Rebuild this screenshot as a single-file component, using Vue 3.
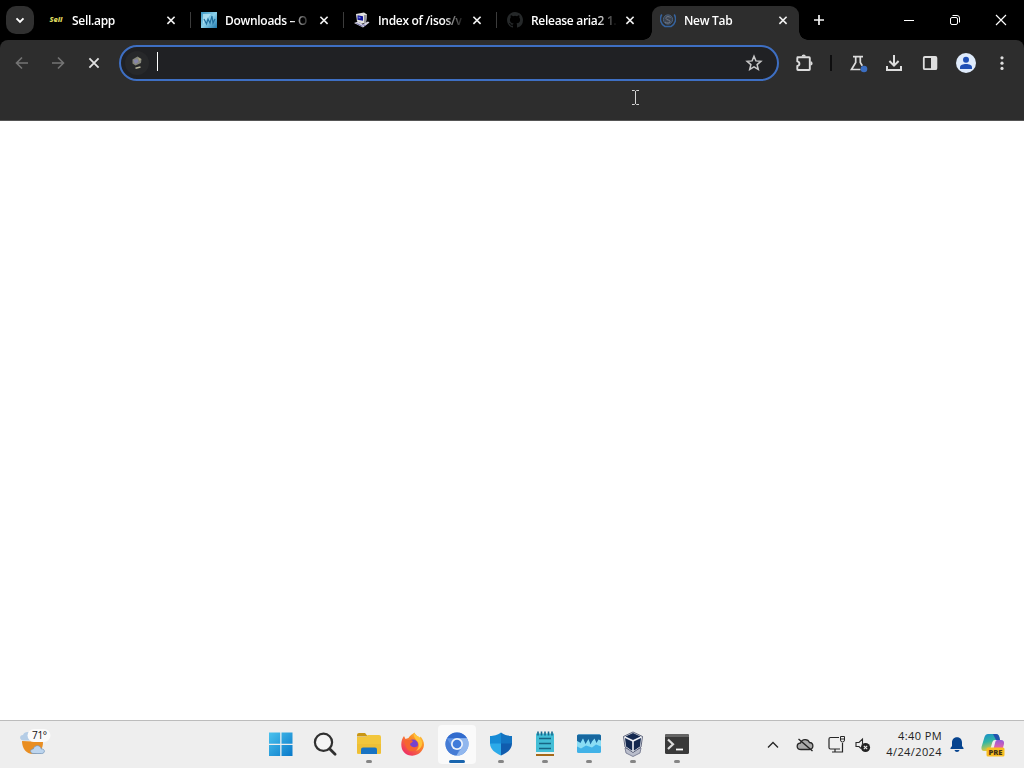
<script setup>
import { ref } from 'vue'

const tabs = ref([
  { id: 1, title: 'Sell.app', icon: 'sell' },
  { id: 2, title: 'Downloads – O', icon: 'wave' },
  { id: 3, title: 'Index of /isos/v', icon: 'pc' },
  { id: 4, title: 'Release aria2 1.', icon: 'github' },
  { id: 5, title: 'New Tab', icon: 'globe' }
])
const activeTab = ref(5)

const apps = [
  { name: 'start' },
  { name: 'search' },
  { name: 'files', running: true },
  { name: 'firefox' },
  { name: 'chromium', running: true, active: true },
  { name: 'shield', running: true },
  { name: 'notepad', running: true },
  { name: 'monitor', running: true },
  { name: 'vbox', running: true },
  { name: 'terminal', running: true }
]

function closeTab(id) {
  tabs.value = tabs.value.filter(t => t.id !== id)
}
</script>

<template>
  <div class="desktop">
    <header class="tabstrip">
      <button class="tab-search">
        <svg width="28" height="28" viewBox="0 0 28 28"><path d="M10.5 12.3l3.5 3.5 3.5-3.5" fill="none" stroke="#fff" stroke-width="1.9" /></svg>
      </button>
      <div class="tabs">
        <div v-for="tab in tabs" :key="tab.id" class="tab" :class="{ active: tab.id === activeTab }" @click="activeTab = tab.id">
          <svg v-if="tab.icon === 'sell'" class="favicon" viewBox="0 0 16 16">
            <text x="1.5" y="10.3" class="sell-text" textLength="13" lengthAdjust="spacingAndGlyphs">Sell</text>
          </svg>
          <svg v-else-if="tab.icon === 'wave'" class="favicon" viewBox="0 0 16 16">
            <defs><linearGradient id="sky" x2="1" y2="1"><stop stop-color="#3994bf" /><stop offset=".5" stop-color="#8bd0ea" /><stop offset="1" stop-color="#1d77ab" /></linearGradient></defs>
            <rect width="16" height="16" fill="url(#sky)" />
            <path d="M2 2h8L2 12z" fill="#c3eaf5" opacity=".7" />
            <path d="M3 7l2.500 5L7 7l2 4 2-7 1 7 2-4" fill="none" stroke="#216f9e" stroke-width="1.200" />
          </svg>
          <svg v-else-if="tab.icon === 'pc'" class="favicon" viewBox="0 0 16 16">
            <path d="M2 2l8-1.5 3 2-1 8-4 1-5-2z" fill="#e3e3e0" />
            <path d="M3.5 3.2l5.5 1v4.6l-5.5-1z" fill="#11159a" />
            <path d="M4.5 4.5l2 .4v1.7l-2-.4z" fill="#6d7be8" />
            <path d="M10 3l3 0-1 7-2 1z" fill="#96969c" />
            <path d="M0 11l4-1.5 5 2.5 5-2.5 1.5 1-6.5 5z" fill="#d4d3e0" />
            <path d="M2.5 11.4l6 3M8 12.5l4 1.2" stroke="#6d6da5" stroke-width="1" />
          </svg>
          <svg v-else-if="tab.icon === 'github'" class="favicon" viewBox="0 0 16 16">
            <path fill="#252829" d="M8 0C3.58 0 0 3.58 0 8c0 3.54 2.29 6.53 5.47 7.59.4.07.55-.17.55-.38 0-.19-.01-.82-.01-1.49-2.01.37-2.53-.49-2.69-.94-.09-.23-.48-.94-.82-1.13-.28-.15-.68-.52-.01-.53.63-.01 1.08.58 1.23.82.72 1.21 1.87.87 2.33.66.07-.52.28-.87.51-1.07-1.78-.2-3.64-.89-3.64-3.95 0-.87.31-1.59.82-2.15-.08-.2-.36-1.02.08-2.12 0 0 .67-.21 2.2.82a7.6 7.6 0 014 0c1.53-1.04 2.2-.82 2.2-.82.44 1.1.16 1.92.08 2.12.51.56.82 1.27.82 2.15 0 3.07-1.87 3.75-3.65 3.95.29.25.54.73.54 1.48 0 1.07-.01 1.93-.01 2.2 0 .21.15.46.55.38A8 8 0 0016 8c0-4.42-3.58-8-8-8z" />
          </svg>
          <svg v-else class="favicon" viewBox="0 0 16 16">
            <path d="M1.800 2.500C-1 7 1 12.500 5 14.500h6c4-2 6-7.500 3.200-12" fill="none" stroke="#35639f" stroke-width="1.500" />
            <circle cx="8" cy="7.500" r="4.600" fill="#3b424e" stroke="#4b6483" />
            <path d="M10.500 5.500C8.500 4 5.500 4.500 6 6.500s4 1 4 3-3.500 2-5 .5" fill="none" stroke="#737b88" stroke-width="1" />
          </svg>
          <span class="title">{{ tab.title }}</span>
          <button class="close" @click.stop="closeTab(tab.id)">
            <svg width="16" height="16" viewBox="0 0 16 16"><path d="M4.4 4.7l7.2 7.200M11.6 4.700l-7.2 7.200" stroke="#f2f2f2" stroke-width="1.600" /></svg>
          </button>
        </div>
      </div>
      <button class="new-tab">
        <svg width="16" height="16" viewBox="0 0 16 16"><path d="M8 3v10M3 8h10" stroke="#f5f5f5" stroke-width="1.7" /></svg>
      </button>
      <div class="window-controls">
        <svg viewBox="0 0 46 40"><path d="M18 20.5h10" stroke="#fff" /></svg>
        <svg viewBox="0 0 46 40"><rect x="18.5" y="17.5" width="7" height="7" rx="1.5" fill="none" stroke="#fff" /><path d="M20.5 15.5h4.5q2.5 0 2.5 2.5v4.5" fill="none" stroke="#fff" /></svg>
        <svg viewBox="0 0 46 40"><path d="M18 15l10 10M28 15l-10 10" stroke="#fff" stroke-width="1.15" /></svg>
      </div>
    </header>

    <div class="chrome">
      <nav class="toolbar">
        <div class="nav-buttons">
          <svg viewBox="0 0 36 36"><path d="M28 18H17M22 12.5L16.5 18l5.5 5.5" fill="none" stroke="#747474" stroke-width="1.6" /></svg>
          <svg viewBox="0 0 36 36"><path d="M16 18h11M22 12.5l5.5 5.5-5.5 5.5" fill="none" stroke="#747474" stroke-width="1.6" /></svg>
          <svg viewBox="0 0 36 36"><path d="M17.4 13.4l9.2 9.2M26.6 13.4l-9.2 9.2" stroke="#e2e2e2" stroke-width="1.8" /></svg>
        </div>
        <div class="omnibox">
          <svg class="site" width="24" height="24" viewBox="0 0 24 24">
            <circle cx="12" cy="12" r="12" fill="#27282a" />
            <path d="M7.500 8.500l5-3 4 2.500-.5 4-5.500 2.500-3-2z" fill="#85867a" />
            <path d="M8.500 9l4-1 1 3-3.500 2z" fill="#8585aa" />
            <path d="M13 6.500l3 1.500-1.500 2z" fill="#aca681" />
            <path d="M10.500 17.300l5-1.300" stroke="#b6b59d" stroke-width="1.600" />
          </svg>
          <span class="caret"></span>
          <svg class="star" width="18" height="18" viewBox="0 0 18 18"><path d="M9 2.200l1.900 4.700 5 .4-3.800 3.300 1.200 4.900L9 12.800l-4.300 2.700 1.200-4.900-3.800-3.300 5-.4z" fill="none" stroke="#c8c8c8" stroke-width="1.500" /></svg>
        </div>
        <svg class="ext" viewBox="0 0 36 36">
          <path d="M11.500 12.200h11.600q.7 0 .7.700v11.400q0 .7-.7.700H12q-.7 0-.7-.7V21c2.800-.6 2.800-4 0-4.600v-3.500q0-.7.700-.7z" fill="none" stroke="#dcdcdc" stroke-width="1.900" stroke-linejoin="round" />
          <path d="M15.600 11.500a2.100 2.100 0 014.200 0zM24.500 16.300a2.100 2.100 0 010 4.200z" fill="#dcdcdc" />
        </svg>
        <span class="divider"></span>
        <div class="actions">
          <svg viewBox="0 0 36 36">
            <path d="M13 11.600h10M15.700 12v5.500L11.500 24.500h9M20.300 12v5.500l2 3.300" fill="none" stroke="#dcdcdc" stroke-width="1.700" />
            <circle cx="24" cy="24" r="3.300" fill="#3b6ec2" />
          </svg>
          <svg viewBox="0 0 36 36"><path d="M18 10v10.500M13.400 16l4.600 4.600 4.600-4.600M11 21v4h14v-4" fill="none" stroke="#dedede" stroke-width="2" /></svg>
          <svg viewBox="0 0 36 36"><rect x="11.800" y="12" width="12.600" height="12.200" rx="1" fill="none" stroke="#dedede" stroke-width="1.800" /><path d="M19 12h6v12h-6z" fill="#dedede" /></svg>
          <svg viewBox="0 0 36 36"><circle cx="18" cy="18" r="10" fill="#dfebfb" /><circle cx="18" cy="14.800" r="3" fill="#1f4fb5" /><path d="M12 24v-1.800c0-4.300 12-4.300 12 0V24z" fill="#1f4fb5" /></svg>
          <svg viewBox="0 0 36 36"><g fill="#dedede"><circle cx="18" cy="12.800" r="1.600" /><circle cx="18" cy="18.200" r="1.600" /><circle cx="18" cy="23.400" r="1.600" /></g></svg>
        </div>
      </nav>
    </div>

    <main class="page"></main>

    <footer class="taskbar">
      <div class="weather">
        <svg width="36" height="32" viewBox="0 0 36 32">
          <path d="M5 12.500c-5 0-5-5.500-1-5.500 1-4 8-4 9 0v5.500z" fill="#b5cde6" />
          <path d="M3 13c0 7 4 13 11 13s10-5 10-12z" fill="#e98e22" />
          <rect x="8.500" y="1" width="23" height="13" rx="6.500" fill="#fbfbfb" />
          <path d="M14 25.500c-3.500-.5-3-4.500.3-4.500 1.200-4.500 7-4.500 8 0 4-.4 4 4.500.5 4.500z" fill="#bdd5ee" stroke="#7999bd" stroke-width=".8" />
        </svg>
        <span>71°</span>
      </div>
      <div class="apps">
        <div v-for="app in apps" :key="app.name" class="app" :class="{ active: app.active, running: app.running }">
          <svg v-if="app.name === 'start'" viewBox="0 0 28 28">
            <defs><linearGradient id="win" gradientUnits="userSpaceOnUse" x1="2" y1="2" x2="26" y2="26"><stop stop-color="#4bc3ee" /><stop offset="1" stop-color="#0878c9" /></linearGradient></defs>
            <path d="M2 2.5h11.2v11.2H2zM14.5 2.5h11v11.2h-11zM2 15h11.2v11H2zM14.5 15h11v11h-11z" fill="url(#win)" />
          </svg>
          <svg v-else-if="app.name === 'search'" viewBox="0 0 28 28">
            <circle cx="12.5" cy="12.3" r="8.6" fill="#f4f4f4" stroke="#303030" stroke-width="2.2" />
            <path d="M18.6 18.7l5.5 5.5" stroke="#303030" stroke-width="2.8" stroke-linecap="round" />
          </svg>
          <svg v-else-if="app.name === 'files'" viewBox="0 0 28 28">
            <path d="M2 5q0-2 2-2h6l3 3.5H2z" fill="#c99614" />
            <path d="M2 7h8l3-2h11q2 0 2 2v16q0 1-1 1H3q-1 0-1-1z" fill="#f2c63c" />
            <path d="M2 14h24v9H2z" fill="#e9b82f" opacity=".5" />
            <path d="M6 24v-4.500q0-2 2-2h12q2 0 2 2V24z" fill="#1873c3" />
          </svg>
          <svg v-else-if="app.name === 'firefox'" viewBox="0 0 28 28">
            <defs><linearGradient id="fox" x1="1" y1="0" x2=".2" y2="1"><stop stop-color="#ffe145" /><stop offset=".4" stop-color="#fb8b25" /><stop offset="1" stop-color="#ed2869" /></linearGradient></defs>
            <path d="M5 6l1.5 3 3-1c1-2 2.5-3 4-4l2-1.5c1 3 4 3.5 5.3 5.5l.8-1.5c3.5 4 4.6 9 1.8 13.3C18 28.500 6 27 3 19 1.500 14.500 2.500 9 5 6z" fill="url(#fox)" />
            <circle cx="14" cy="14.500" r="5" fill="#7542cd" />
            <path d="M5 11c3-2 5 0 7-1l2 1c-1 2-3 2-3 3 0 3 6 5 8 1-1 8-10 8-12 2z" fill="#f6652f" />
            <path d="M15 3c-1 4 2 6 4 9 2 4 0 7-2 9 6-2 8-8 4-13-1-2-5-2-6-5z" fill="#ffc43a" />
          </svg>
          <svg v-else-if="app.name === 'chromium'" viewBox="0 0 28 28">
            <circle cx="14" cy="14" r="11.500" fill="#5e94e6" />
            <path d="M4 8.200A11.500 11.500 0 0124 8.200H14z" fill="#316bcd" />
            <path d="M4 8.200L9 17l7 3-2.500 5.500A11.500 11.500 0 014 8.200z" fill="#457bd4" />
            <path d="M24 8.200H14l5 9-5.500 8.300A11.500 11.500 0 0024 8.200z" fill="#91b7ee" />
            <circle cx="14" cy="14" r="6" fill="#edf3fb" /><circle cx="14" cy="14" r="4.300" fill="#407bda" />
          </svg>
          <svg v-else-if="app.name === 'shield'" viewBox="0 0 28 28">
            <path d="M14 2.500c-4 3-7 3.300-11 3.500v8h11z" fill="#168bd6" />
            <path d="M14 2.500c4 3 7 3.300 11 3.500v8H14z" fill="#1373c1" />
            <path d="M3 13.500h11v12C8 23 3 19 3 13.500z" fill="#2caae9" />
            <path d="M25 13.500H14v12c6-2.500 11-6.500 11-12z" fill="#105cae" />
          </svg>
          <svg v-else-if="app.name === 'notepad'" viewBox="0 0 28 28">
            <path d="M5 3.500h18v20H5z" fill="#43bed6" />
            <path d="M5 23h18v3H5z" fill="#a56919" /><path d="M5 22h18v2H5z" fill="#edf3ed" />
            <path d="M7 1.500v4M10.500 1.500v4M14 1.500v4M17.500 1.500v4M21 1.500v4" stroke="#17678b" stroke-width="1.600" />
            <path d="M8 8.500h12M8 13.500h12M8 18.500h12" stroke="#176584" stroke-width="1.700" />
          </svg>
          <svg v-else-if="app.name === 'monitor'" viewBox="0 0 28 28">
            <rect x="2" y="4.500" width="24" height="18.500" rx="1.500" fill="#41b2e7" />
            <path d="M2 6Q2 4.500 3.500 4.500h21Q26 4.500 26 6v5.500l-2.500-1-2 3.500-2-4.500-2.500 3-1.500 3-2-5.500-3 5L8 8.500 5.500 13 2 11z" fill="#17679f" />
            <path d="M2 11l3.500 2L8 8.500l2.500 5.500 3-5 2 5.500 1.500-3 2.500-3 2 4.500 2-3.500 2.500 1v6l-5-2-4 3-6-2-5 3-4-2z" fill="#8bddf4" />
          </svg>
          <svg v-else-if="app.name === 'vbox'" viewBox="0 0 28 28">
            <path d="M6 18l8 2 8-2-1 5-7 3.500-7-3.500z" fill="#b9bdcb" stroke="#686d86" stroke-width=".8" />
            <path d="M14 2l9.500 4.500-1.500 10.500-8 5.500-8-5.500L4.500 6.500z" fill="#eef0f5" stroke="#252e4c" stroke-width=".7" />
            <path d="M14 3l7.500 3.500L14 10 6.500 6.500zM6 8l7.200 3.500v9.300L7 16.500zM22 8l-7.200 3.500v9.300L21 16.500z" fill="#14284f" />
          </svg>
          <svg v-else viewBox="0 0 28 28">
            <rect x="2" y="4" width="24" height="20" rx="1.500" fill="#393939" />
            <path d="M2 5.500Q2 4 3.500 4h21Q26 4 26 5.500V7H2z" fill="#656565" />
            <path d="M5 9.500l5 4.800-5 4.700" fill="none" stroke="#ddd" stroke-width="2.200" /><path d="M13 19.500h7" stroke="#fff" stroke-width="1.800" />
          </svg>
        </div>
      </div>
      <div class="tray">
        <svg width="32" height="24" viewBox="0 0 32 24"><path d="M11 14.500L16 9.500l5 5" fill="none" stroke="#262626" stroke-width="1.300" /></svg>
        <svg width="32" height="24" viewBox="0 0 32 24">
          <path d="M12 16.500c-5 0-5-6-.5-6.500C13 5.500 19 5.500 20.500 9.500c4.500.2 4.500 7 0 7z" fill="#ababab" stroke="#272727" stroke-width="1.300" />
          <path d="M9.500 6l14 12" stroke="#222" stroke-width="1.400" />
        </svg>
        <svg width="32" height="24" viewBox="0 0 32 24">
          <path d="M18 4.500H9.500Q8 4.500 8 6v8.500Q8 16 9.500 16h9.500M14 16v3M11 19h9M21.500 10v9h-2.500" fill="none" stroke="#262626" stroke-width="1.200" />
          <path d="M19.500 3.500h4V7q0 2-2 2t-2-2zM19.500 6h4" fill="none" stroke="#262626" />
        </svg>
        <svg class="sound" width="18" height="24" viewBox="0 0 18 24">
          <path d="M7 15.500l-2-2H2v-4h3L8.500 6v5" fill="none" stroke="#292929" stroke-width="1.100" />
          <circle cx="11.500" cy="14.500" r="4.600" fill="#222" /><path d="M9.800 12.800l3.400 3.400M13.200 12.800l-3.400 3.400" stroke="#eee" stroke-width="1.100" />
        </svg>
        <div class="clock">
          <span>4:40 PM</span>
          <span>4/24/2024</span>
        </div>
        <svg class="bell" width="16" height="18" viewBox="0 0 16 18"><path d="M1.500 13v-1L3 10V6.500c0-7 10-7 10 0V10l1.500 2v1zM5.500 14h5c-.5 2.500-4.500 2.500-5 0z" fill="#07448f" /></svg>
        <svg class="copilot" width="28" height="28" viewBox="0 0 28 28">
          <defs>
            <linearGradient id="cpa" x2=".3" y2="1"><stop stop-color="#188bcb" /><stop offset=".5" stop-color="#31b5a5" /><stop offset="1" stop-color="#e6cb39" /></linearGradient>
            <linearGradient id="cpb" x2="0" y2="1"><stop stop-color="#935bda" /><stop offset=".6" stop-color="#eb62a5" /><stop offset="1" stop-color="#f39a52" /></linearGradient>
          </defs>
          <path d="M9 3h8q2.500 0 3.300 3l.7 3h-5q-2 0-2.600 2l-2 7q-.6 2-3 2H5q-3 0-2.500-4L5.500 6Q6.500 3 9 3z" fill="url(#cpa)" />
          <path d="M14 3h3q2.500 0 3.300 3l.7 3h-4z" fill="#2352af" />
          <path d="M18 9h4q3.500 0 3 4l-2 7q-1 3-4 3h-8q2 0 3-3l2-8q.500-3 2-3z" fill="url(#cpb)" />
          <rect x="7.500" y="16.500" width="18" height="9" rx="1.500" fill="#f9bd21" />
          <text x="9.500" y="23.800" class="pre-text" textLength="14" lengthAdjust="spacingAndGlyphs">PRE</text>
        </svg>
      </div>
    </footer>

    <svg class="pointer" width="9" height="17" viewBox="0 0 9 17"><path d="M1 1.500h2.500l1 1 1-1H8M4.500 2v13M1 15.500h2.500l1-1 1 1H8" fill="none" stroke="#d5d5d5" /></svg>
  </div>
</template>

<style>
body {
  margin: 0;
  overflow: hidden;
}
</style>

<style scoped>
.desktop {
  position: relative;
  width: 1024px;
  height: 768px;
  display: flex;
  flex-direction: column;
  overflow: hidden;
  background: #000;
  font-family: "Open Sans", "Noto Sans", sans-serif;
}

svg {
  display: block;
  flex-shrink: 0;
}

button {
  border: none;
  padding: 0;
  background: none;
  cursor: pointer;
}

.tabstrip {
  height: 40px;
  display: flex;
  align-items: center;
}

.tab-search {
  width: 28px;
  height: 28px;
  margin: 0 6px;
  border-radius: 10px;
  background: #303030;
}

.tabs {
  display: flex;
  height: 40px;
}

.tab {
  position: relative;
  box-sizing: border-box;
  width: 153px;
  height: 40px;
  padding-left: 8px;
  display: flex;
  align-items: center;
  color: #fff;
}

.tab + .tab:not(.active)::before {
  content: "";
  position: absolute;
  left: -3px;
  top: 12px;
  width: 1px;
  height: 16px;
  background: #3c3c3c;
}

.tab.active {
  width: 147px;
  height: 34px;
  margin-top: 6px;
  padding-bottom: 6px;
  border-radius: 9px 9px 0 0;
  background: #2d2d2d;
}

.tab.active::before,
.tab.active::after {
  content: "";
  position: absolute;
  bottom: 0;
  width: 9px;
  height: 9px;
}

.tab.active::before {
  left: -9px;
  background: radial-gradient(circle at 0 0, transparent 8.5px, #2d2d2d 9px);
}

.tab.active::after {
  right: -9px;
  background: radial-gradient(circle at 100% 0, transparent 8.5px, #2d2d2d 9px);
}

.favicon {
  width: 16px;
  height: 16px;
}

.sell-text {
  font: italic 800 6.5px "Open Sans", sans-serif;
  fill: #d8d45c;
}

.title {
  width: 91px;
  margin-left: 8px;
  padding-top: 1px;
  white-space: nowrap;
  font-size: 12px;
  font-weight: 600;
  line-height: 18px;
  letter-spacing: -0.3px;
  -webkit-mask-image: linear-gradient(to right, #000 66px, transparent 86px);
  mask-image: linear-gradient(to right, #000 66px, transparent 86px);
}

.close {
  width: 16px;
  height: 16px;
}

.new-tab {
  width: 16px;
  margin-left: 12px;
}

.window-controls {
  display: flex;
  margin-left: auto;
}

.window-controls svg {
  width: 46px;
  height: 40px;
}

.chrome {
  box-sizing: border-box;
  height: 81px;
  border-bottom: 1px solid #555;
  border-radius: 8px 8px 0 0;
  background: #2d2d2d;
}

.toolbar {
  height: 46px;
  display: flex;
  align-items: center;
}

.nav-buttons {
  display: flex;
  margin-right: 11px;
}

.nav-buttons svg {
  width: 36px;
  height: 36px;
}

.omnibox {
  box-sizing: border-box;
  width: 660px;
  height: 36px;
  padding: 0 14px 0 4px;
  display: flex;
  align-items: center;
  border: 2px solid #3e6fc3;
  border-radius: 18px;
  background: #202124;
}

.caret {
  width: 1px;
  height: 19px;
  margin: -3px 0 0 8px;
  background: #fff;
}

.star {
  margin-left: auto;
}

.ext {
  width: 36px;
  height: 36px;
  margin-left: 7px;
}

.divider {
  width: 2px;
  height: 16px;
  margin: 0 8px;
  background: #0e0e0f;
}

.actions {
  display: flex;
  align-items: center;
}

.actions svg {
  width: 36px;
  height: 36px;
}

.page {
  height: 599px;
  background: #fff;
}

.taskbar {
  box-sizing: border-box;
  height: 48px;
  border-top: 1px solid #bcbcbc;
  background: #eee;
  display: flex;
  color: #222;
}

.weather {
  position: relative;
  width: 240px;
  margin: 7px 0 0 19px;
}

.weather span {
  position: absolute;
  left: 13px;
  top: 0;
  font-size: 10px;
  line-height: 14px;
  letter-spacing: -0.3px;
  color: #111;
}

.apps {
  display: flex;
}

.app {
  position: relative;
  width: 44px;
  height: 47px;
  display: flex;
  justify-content: center;
}

.app svg {
  position: relative;
  width: 28px;
  height: 28px;
  margin-top: 9px;
}

.app.active::before {
  content: "";
  position: absolute;
  left: 3px;
  top: 4px;
  width: 38px;
  height: 39px;
  border-radius: 4px;
  background: #fafafa;
}

.app.running::after {
  content: "";
  position: absolute;
  left: 19px;
  bottom: 5px;
  width: 6px;
  height: 3px;
  border-radius: 2px;
  background: #858585;
}

.app.active::after {
  left: 14px;
  width: 16px;
  background: #1965ae;
}

.tray {
  display: flex;
  align-items: center;
  margin-left: auto;
}

.sound {
  margin-left: 1px;
}

.clock {
  width: 70px;
  padding-bottom: 2px;
  display: flex;
  flex-direction: column;
  align-items: flex-end;
  font-size: 11px;
  line-height: 16px;
  letter-spacing: 0.4px;
}

.bell {
  margin-left: 7px;
}

.copilot {
  margin: 0 17px 0 14px;
}

.pre-text {
  font: 800 7px "Open Sans", sans-serif;
  fill: #443217;
}

.pointer {
  position: absolute;
  left: 631px;
  top: 89px;
}
</style>
